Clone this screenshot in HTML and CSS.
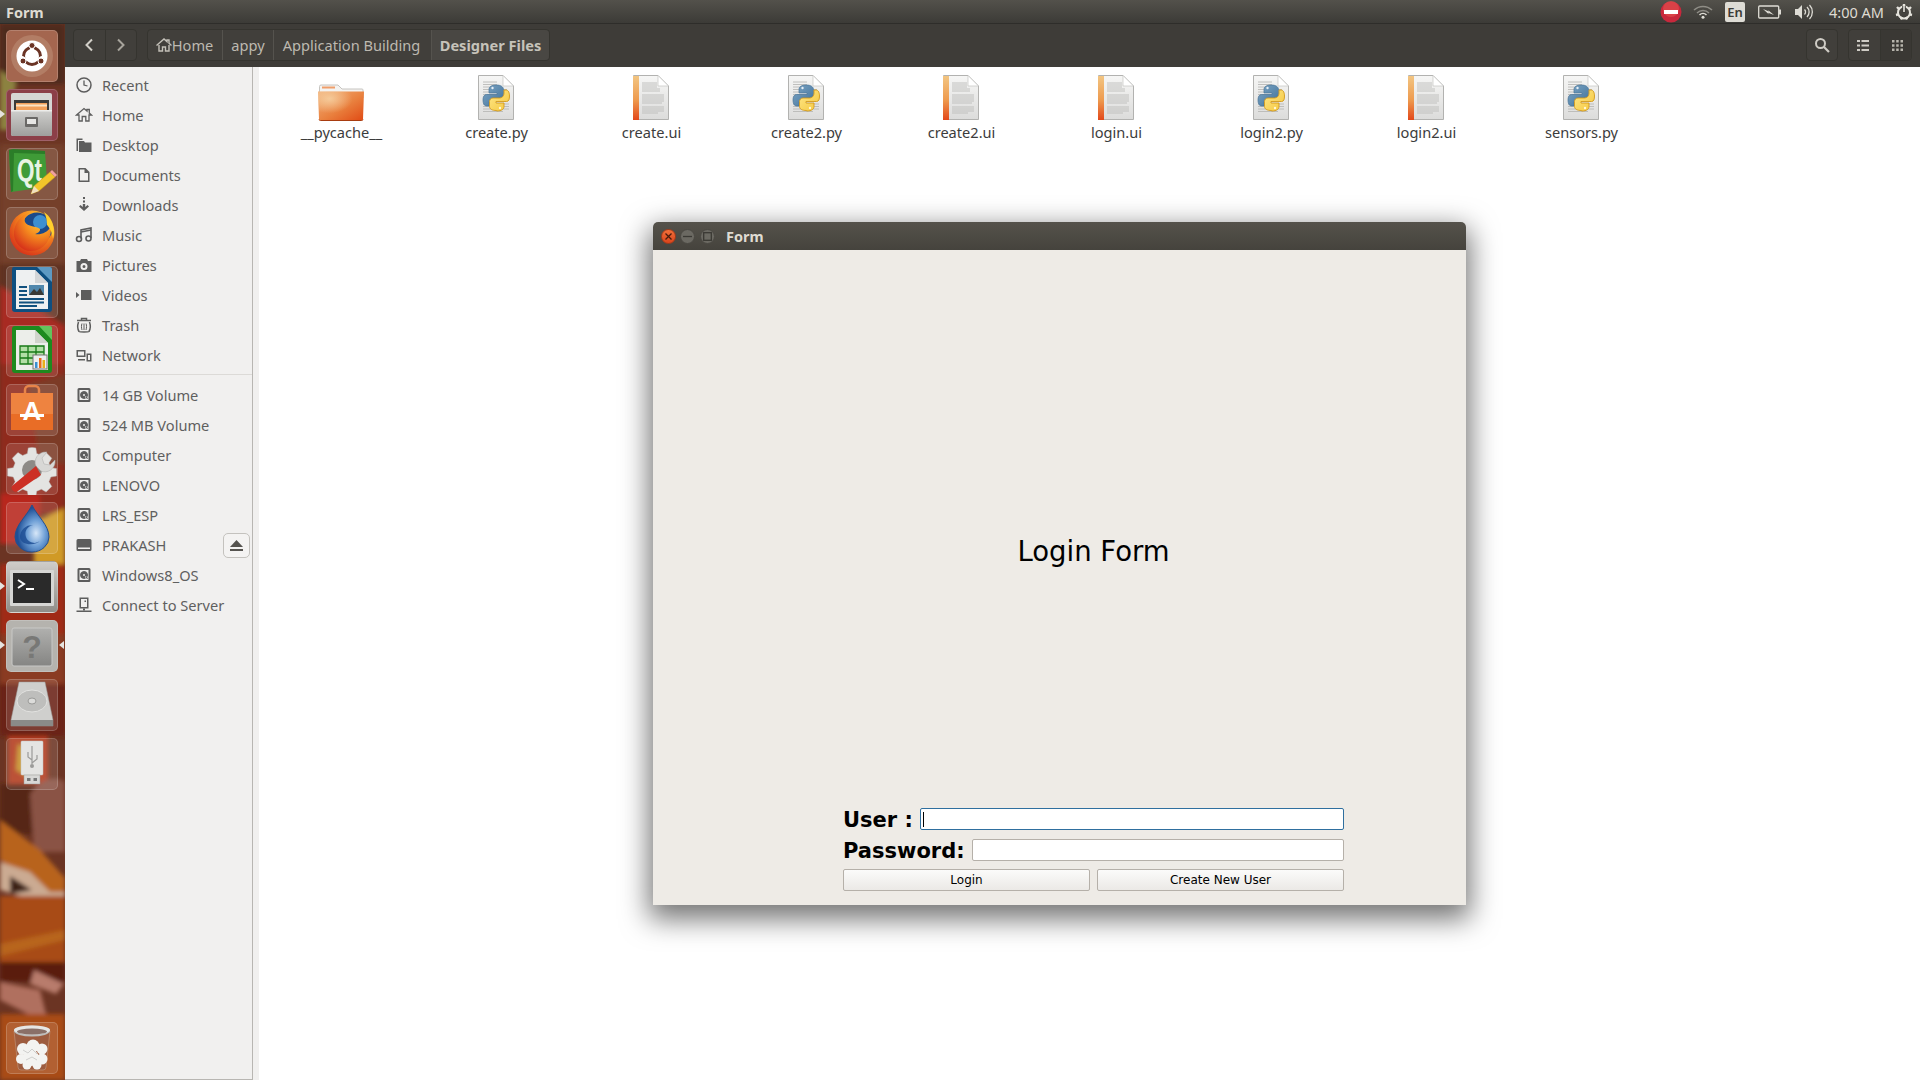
FILE: index.html
```html
<!DOCTYPE html>
<html lang="en">
<head>
<meta charset="utf-8">
<title>Form</title>
<link rel="stylesheet" href="styles.css">
</head>
<body>
<svg class="defs" width="0" height="0" aria-hidden="true">
  <defs>
    <linearGradient id="paper" x1="0" y1="0" x2="0" y2="1"><stop offset="0" stop-color="#f6f6f5"/><stop offset="1" stop-color="#dcdcdb"/></linearGradient>
    <linearGradient id="spine" x1="0" y1="0" x2="0" y2="1"><stop offset="0" stop-color="#f2c582"/><stop offset=".55" stop-color="#ee9a4e"/><stop offset="1" stop-color="#e2481a"/></linearGradient>
    <linearGradient id="fold" x1="0" y1="0" x2="1" y2="1"><stop offset="0" stop-color="#f2b27c"/><stop offset=".55" stop-color="#e9803e"/><stop offset="1" stop-color="#e04a14"/></linearGradient>
    <radialGradient id="foldglow" cx=".25" cy=".25" r=".5"><stop offset="0" stop-color="#f6cf9f" stop-opacity=".9"/><stop offset="1" stop-color="#f6cf9f" stop-opacity="0"/></radialGradient>
    <linearGradient id="pyb" x1="0" y1="0" x2="1" y2="1"><stop offset="0" stop-color="#7ea7c6"/><stop offset="1" stop-color="#3f7099"/></linearGradient>
    <linearGradient id="pyy" x1="0" y1="0" x2="1" y2="1"><stop offset="0" stop-color="#ffe88a"/><stop offset="1" stop-color="#f4c63c"/></linearGradient>
    <linearGradient id="cab" x1="0" y1="0" x2="0" y2="1"><stop offset="0" stop-color="#cfcfcd"/><stop offset="1" stop-color="#9f9f9d"/></linearGradient>
    <linearGradient id="helpg" x1="0" y1="0" x2="0" y2="1"><stop offset="0" stop-color="#b0b0ae"/><stop offset="1" stop-color="#858583"/></linearGradient>
    <symbol id="lines" viewBox="0 0 36 46">
      <path d="M5 7h14M5 9.500h14M5 12h15M5 14.500h24M5 17h26M5 19.500h26M5 22h26M5 24.500h24M5 29h26M5 31.500h26M5 34h26M5 36.500h20" stroke="#b9b9b7" stroke-width=".9" fill="none"/>
    </symbol>
    <symbol id="file-py" viewBox="0 0 36 46">
      <path d="M.5.500H25L35.500 11V44.500H.5z" fill="url(#paper)" stroke="#b2b2b0"/>
      <path d="M25 .5V11H35.500z" fill="#fff" stroke="#c4c4c2" stroke-width=".7"/>
      <use href="#lines" width="36" height="46"/>
      <path d="M18.500 10c-5.500 0-7.500 2-7.500 4.500V18h8v1.500H8.500C6 19.500 5 22 5 25s1 6 3.500 6H11v-3.500c0-2.500 2-4.500 4.500-4.500H22c2 0 3.500-1.500 3.500-3.500v-5c0-2.500-2.500-4.500-7-4.500z" fill="url(#pyb)" stroke="#4c7698" stroke-width=".7"/>
      <path d="M18.500 36c5.500 0 7.500-2 7.500-4.500V28h-8v-1.500h10.500C31 26.500 31.500 24 31.500 21s-1-6-3.500-6H26v3.500c0 2.500-2 4.500-4.500 4.500H15c-2 0-3.500 1.500-3.500 3.500v5c0 2.500 2.500 4 7 4z" fill="url(#pyy)" stroke="#d39a1c" stroke-width=".9"/>
      <circle cx="14.500" cy="13" r="1.200" fill="#e6eff6"/><circle cx="22" cy="33" r="1.200" fill="#fff8d8"/>
    </symbol>
    <symbol id="file-ui" viewBox="0 0 36 46">
      <path d="M.5.500H25L35.500 11V44.500H.5z" fill="url(#paper)" stroke="#b2b2b0"/>
      <path d="M25 .5V11H35.500z" fill="#fff" stroke="#c4c4c2" stroke-width=".7"/>
      <rect x="0" y="1" width="6" height="44" fill="url(#spine)"/>
      <path d="M9 8h15M9 10h15M9 12h15M9 14h18M9 16h18M9 20h22M9 22h22M9 24h22M9 26h22M9 28h20M9 32h22M9 34h22M9 36h22M9 38h16" stroke="#bcbcba" stroke-width=".9" fill="none"/>
    </symbol>
    <symbol id="folder" viewBox="0 0 46 38">
      <path d="M1.500 3.500A1.500 1.500 0 0 1 3 2h17l4 4h20a1 1 0 0 1 1 1v8H1.500z" fill="#f4f3f1" stroke="#c6c4c0"/>
      <rect x="4" y="3.500" width="13" height="2" fill="#ef9e6a"/>
      <path d="M0 8.500h46l-1 27.500a1.500 1.500 0 0 1-1.500 1.500h-41A1.500 1.500 0 0 1 1 36z" fill="url(#fold)"/>
      <path d="M0 8.500h46l-1 27.500a1.500 1.500 0 0 1-1.500 1.500h-41A1.500 1.500 0 0 1 1 36z" fill="url(#foldglow)"/>
      <path d="M1 36.500a1.500 1.500 0 0 0 1.500 1h41a1.500 1.500 0 0 0 1.500-1" fill="none" stroke="#a83c10"/>
    </symbol>
    <symbol id="i-drive" viewBox="0 0 18 18">
      <path d="M4 2h10a1.500 1.500 0 0 1 1.500 1.500v11A1.500 1.500 0 0 1 14 16H4a1.500 1.500 0 0 1-1.500-1.500v-11A1.500 1.500 0 0 1 4 2zm.5 2v10h9V4z" fill="#5d5d5d" fill-rule="evenodd"/>
      <path d="M9 5a4 4 0 1 0 1.800 7.600L9.800 10.200 12.500 11A4 4 0 0 0 9 5zm0 3a1 1 0 1 1 0 2 1 1 0 0 1 0-2z" fill="#5d5d5d" fill-rule="evenodd"/>
      <path d="M11 11l1.600 1.600" stroke="#5d5d5d" stroke-width="1.200"/>
    </symbol>
  </defs>
</svg>

<header class="topbar">
  <span class="topbar-title">Form</span>
  <div class="indicators">
    <svg class="ind-dnd" width="22" height="22" viewBox="0 0 22 22"><circle cx="11" cy="11" r="10.500" fill="#c8283c"/><circle cx="11" cy="8" r="8" fill="#e4524f" opacity=".6"/><rect x="4" y="9" width="14" height="4" fill="#fff"/></svg>
    <svg class="ind-wifi" width="20" height="14" viewBox="0 0 20 14"><path d="M1 5a13 13 0 0 1 18 0M4 8a8.500 8.500 0 0 1 12 0" fill="none" stroke="#8f8d86" stroke-width="1.500"/><path d="M6.500 10a5 5 0 0 1 7 0" fill="none" stroke="#dedcd5" stroke-width="1.500"/><circle cx="10" cy="12.300" r="1.500" fill="#dedcd5"/></svg>
    <span class="ind-lang">En</span>
    <svg class="ind-batt" width="24" height="14" viewBox="0 0 24 14"><rect x=".7" y="1" width="20" height="12" rx="1" fill="none" stroke="#dedcd5" stroke-width="1.300"/><rect x="21" y="4.500" width="2" height="5" fill="#dedcd5"/><path d="M5 4l6 2.500L10 5l6 5-6-2.200L11 9.500z" fill="#dedcd5"/></svg>
    <svg class="ind-vol" width="20" height="18" viewBox="0 0 20 18"><path d="M1 6h3l4-4v14l-4-4H1z" fill="#dedcd5"/><path d="M10.500 6.500a3.500 3.500 0 0 1 0 5M13 4a7 7 0 0 1 0 10M15.500 2a10 10 0 0 1 0 14" fill="none" stroke="#dedcd5" stroke-width="1.300"/></svg>
    <span class="ind-clock">4:00 AM</span>
    <svg class="ind-gear" width="18" height="18" viewBox="0 0 18 18"><circle cx="9" cy="9.500" r="6" fill="none" stroke="#e6e4dd" stroke-width="2"/><path d="M9 1v3M2 4l2 2M16 4l-2 2M1 12l3-.8M17 12l-3-.8M6 16.500l1-2.500M12 16.500l-1-2.500" stroke="#e6e4dd" stroke-width="2.400"/><path d="M9 3v7" stroke="#3e3d38" stroke-width="3.500"/><path d="M9 2.500V9" stroke="#e6e4dd" stroke-width="1.600"/></svg>
  </div>
</header>

<div class="main">
  <nav class="launcher">
    <svg class="wallpaper" viewBox="0 0 65 1056" preserveAspectRatio="none" aria-hidden="true">
      <defs><filter id="soft"><feGaussianBlur stdDeviation="2"/></filter></defs>
      <rect width="65" height="1056" fill="#6b3423"/>
      <g filter="url(#soft)">
        <path d="M0 0h65v60H0z" fill="#4e2b1a"/>
        <path d="M0 46l16 12-6 48H0z" fill="#8c8240"/>
        <path d="M0 120h65v120H0z" fill="#74402c"/>
        <path d="M0 240h65v60l-65-40z" fill="#5e3020"/>
        <path d="M0 262l65 40v40H0z" fill="#a82a20"/>
        <path d="M0 340h65v150H0z" fill="#8f2a1c"/>
        <path d="M28 360l37-10v90H40z" fill="#7c3a26"/>
        <path d="M0 470h40v50H0z" fill="#b8251c"/>
        <path d="M34 498l31-14v56H34z" fill="#d09a26"/>
        <path d="M0 540h65v120H0z" fill="#a02a18"/>
        <path d="M0 610h65v50H0z" fill="#8a3a22"/>
        <path d="M0 660h65v52H0z" fill="#6a2414"/>
        <path d="M8 712h40v48H8z" fill="#b23a1e"/>
        <path d="M18 720l18 8-6 26-14-8z" fill="#c8942a"/>
        <path d="M0 760h65v50H0z" fill="#562616"/>
        <path d="M30 770c12-18 28-18 35-12v70H34z" fill="#8a5244"/>
        <path d="M0 796l40 30 25 28v34L40 866 0 836z" fill="#b8641e"/>
        <path d="M0 838l30 10 20 20h15v8H34L0 866z" fill="#cbaa92"/>
        <path d="M10 852l22 14-22 4z" fill="#3e2018"/>
        <path d="M0 872h65v66H0z" fill="#a84c18"/>
        <path d="M0 920l65-14v10L0 932z" fill="#b8651c"/>
        <path d="M0 938h65v20H0z" fill="#5a1f10"/>
        <path d="M0 958l40 8 6 24-18 0L0 976z" fill="#b0705f"/>
        <path d="M34 946l30 14-8 10-26-10z" fill="#b87c6c"/>
        <path d="M0 990h65v66H0z" fill="#a84c18"/>
      </g>
    </svg>

    <div class="tile tile-dash">
      <svg viewBox="0 0 52 52"><circle cx="26" cy="26" r="21" fill="#c99f88" opacity=".4"/><circle cx="26" cy="26" r="15.500" fill="#fff"/><circle cx="26" cy="26" r="8.500" fill="none" stroke="#6a3324" stroke-width="3"/><g fill="#fff"><rect x="24" y="14" width="4" height="6"/><rect x="15" y="27" width="6" height="5" transform="rotate(30 18 29)"/><rect x="31" y="27" width="6" height="5" transform="rotate(-30 34 29)"/></g><g fill="#6a3324" stroke="#fff" stroke-width="1"><circle cx="26" cy="15.500" r="3"/><circle cx="17" cy="31" r="3"/><circle cx="35" cy="31" r="3"/></g></svg>
    </div>
    <div class="tile tile-files has-pip">
      <svg viewBox="0 0 52 52"><rect x="5" y="4" width="41" height="43" rx="2" fill="#d6d6d4"/><rect x="8" y="11" width="35" height="12" fill="#3c3b39"/><rect x="10" y="14" width="31" height="9" fill="#f2a05a"/><rect x="10" y="15.500" width="31" height="2" fill="#fbe3c4"/><path d="M5 21h41v24a2 2 0 0 1-2 2H7a2 2 0 0 1-2-2z" fill="url(#cab)"/><path d="M5 21h41v1.500H5z" fill="#ececea"/><rect x="19" y="28" width="13" height="10" rx="1" fill="#6a6967"/><rect x="21" y="30" width="9" height="5" fill="#e6e6e4"/></svg>
    </div>
    <div class="tile tile-plain">
      <svg viewBox="0 0 52 52"><path d="M3 2l36 1 2 30-8 7L5 44z" fill="#3f9b37"/><path d="M3 2l4-1 32 2v3L8 5 7 43l-2 1z" fill="#2b7d28"/><text class="qt" x="11" y="33" textLength="25" lengthAdjust="spacingAndGlyphs">Qt</text><path d="M25 46l3-8 16-14 5 5-16 14z" fill="#f2c52a" stroke="#c99a1a" stroke-width=".5"/><path d="M44 24l2-2 5 5-2 2z" fill="#f0a0a0"/><path d="M25 46l3-8 5 5z" fill="#f0e0c0"/></svg>
    </div>
    <div class="tile tile-plain">
      <svg viewBox="0 0 52 52"><defs><radialGradient id="fx" cx=".7" cy=".2" r=".85"><stop offset="0" stop-color="#ffd13a"/><stop offset=".5" stop-color="#f58a1f"/><stop offset="1" stop-color="#d8361a"/></radialGradient></defs><circle cx="26" cy="26" r="22.500" fill="url(#fx)"/><circle cx="31" cy="21" r="15.500" fill="#1c4a8a"/><circle cx="34" cy="15" r="7" fill="#3d8fd0"/><path d="M8 28C7 17 15 8 24 5c-4 3-6 7-5 10 2 5 12 4 15 7 1 3-5 5-5 5 5 1 13-1 16-8 1 13-7 25-20 25C15 44 9 36 8 28z" fill="url(#fx)"/><path d="M38 5c6 4 10 11 10 20 0 2-.500 5-1 7-1-8-4-12-6-14 0-5-1-9-3-13z" fill="#ffcf2d"/></svg>
    </div>
    <div class="tile tile-plain">
      <svg viewBox="0 0 52 52"><path d="M8 1h36a2 2 0 0 1 2 2v40a3 3 0 0 1-3 3H9a3 3 0 0 1-3-3V3a2 2 0 0 1 2-2z" fill="#0e4f80"/><path d="M31 1h13a2 2 0 0 1 2 2v13z" fill="#5d9ac3"/><path d="M10 4h19l13 13v26H10z" fill="#eef0f1"/><path d="M29 4v13h13z" fill="#d2d5d7"/><g fill="#11517f"><rect x="13" y="20" width="8" height="2"/><rect x="13" y="24" width="8" height="2"/><rect x="13" y="28" width="8" height="2"/><rect x="13" y="32" width="25" height="2"/><rect x="13" y="35.500" width="25" height="2"/><rect x="13" y="39" width="18" height="2"/></g><rect x="23" y="19" width="15" height="10" fill="#4f87ad"/><path d="M23 29l5-6 3 3 3-4 4 7z" fill="#3a3a36"/></svg>
    </div>
    <div class="tile tile-plain">
      <svg viewBox="0 0 52 52"><rect x="6" y="1" width="40" height="47" rx="3" fill="#1e8a1e"/><path d="M33 1h11a2 2 0 0 1 2 2v12z" fill="#63c35c"/><path d="M10 5h19l13 13v27H10z" fill="#eceeea"/><path d="M29 5v13h13z" fill="#d0d4cc"/><rect x="14" y="21" width="24" height="18" fill="#b2dfa6"/><path d="M14 21h24v18H14zM14 27h24M14 33h24M22 21v18M30 21v18" fill="none" stroke="#177a17" stroke-width="1.300"/><rect x="27" y="30" width="14" height="14" fill="#eee" stroke="#777"/><rect x="29" y="37" width="2.500" height="6" fill="#3b8fd0"/><rect x="33" y="33" width="2.500" height="10" fill="#e86a1a"/><rect x="36.500" y="35" width="2.500" height="8" fill="#e8b01a"/></svg>
    </div>
    <div class="tile tile-plain">
      <svg viewBox="0 0 52 52"><path d="M19 9V6a4 4 0 0 1 4-4h6a4 4 0 0 1 4 4v3" fill="none" stroke="#e78449" stroke-width="2.500"/><path d="M5 9h42v37H5z" fill="#ee8340"/><path d="M5 30h42v16H5z" fill="#e96d26"/><text class="appstore" x="26" y="36">A</text><rect x="14" y="30" width="24" height="3" fill="#fff"/></svg>
    </div>
    <div class="tile tile-plain">
      <svg viewBox="0 0 52 52"><path d="M26 3l4 .500 1 6 5 2 5-3 6 6-3 5 2 5 6 1v8l-6 1-2 5 3 5-6 6-5-3-5 2-1 6h-8l-1-6-5-2-5 3-6-6 3-5-2-5-6-1v-8l6-1 2-5-3-5 6-6 5 3 5-2 1-6z" fill="#e4e4e2" stroke="#b8b8b6" stroke-width=".5" transform="translate(1.600 1.600) scale(.94)"/><circle cx="26" cy="27" r="10" fill="#8d8a86"/><path d="M30 23c-3-6 2-15 11-14l-5 6 2 6 6 1 5-5c1 9-8 14-14 11z" fill="#d8d8d6" stroke="#aaa" stroke-width=".5"/><path d="M6 43l24-20 5 9L12 48c-3 3-8-2-6-5z" fill="#cc3025"/></svg>
    </div>
    <div class="tile tile-plain">
      <svg viewBox="0 0 52 52"><defs><radialGradient id="dl" cx=".62" cy=".6" r=".55"><stop offset="0" stop-color="#d7e7f8"/><stop offset=".5" stop-color="#6e9fd6"/><stop offset="1" stop-color="#1f4f95"/></radialGradient></defs><path d="M26 3c5 11 17 20 17 32a17 15 0 0 1-34 0C9 23 21 14 26 3z" fill="url(#dl)" stroke="#24508f" stroke-width="1"/><path d="M14 35a12 12 0 0 1 13-12 9 9 0 1 0 8 15c-6 7-21 5-21-3z" fill="#1f4f95" opacity=".85"/></svg>
    </div>
    <div class="tile tile-term has-pip">
      <svg viewBox="0 0 52 52"><rect x="4" y="9" width="44" height="36" rx="1" fill="#d6d6d4"/><rect x="7" y="12" width="38" height="30" fill="#2a2a2a"/><path d="M12 19l6 4-6 4" fill="none" stroke="#fff" stroke-width="2"/><rect x="20" y="27" width="8" height="2" fill="#fff"/></svg>
    </div>
    <div class="tile tile-help has-pip has-pip-right">
      <svg viewBox="0 0 52 52"><rect x="6" y="8" width="40" height="38" rx="2" fill="url(#helpg)" stroke="#c8c8c6"/><text class="helpq" x="26" y="38">?</text></svg>
    </div>
    <div class="tile tile-plain">
      <svg viewBox="0 0 52 52"><path d="M13 3h26l8 38v6H5v-6z" fill="#cfcfcd" stroke="#9a9a98" stroke-width=".5"/><ellipse cx="26" cy="22" rx="15" ry="11" fill="#bebebc" stroke="#e2e2e0"/><ellipse cx="26" cy="22" rx="4" ry="3" fill="#dcdcda" stroke="#9a9a98"/><rect x="5" y="41" width="42" height="6" fill="#8a8a88"/></svg>
    </div>
    <div class="tile tile-plain">
      <svg viewBox="0 0 52 52"><rect x="15" y="3" width="22" height="34" rx="1" fill="#e4e4e2" stroke="#c4c4c2" stroke-width=".5"/><path d="M26 8v18M26 22l-4-3v-5M26 25l5-4v-4" fill="none" stroke="#9b9b99" stroke-width="1.200"/><circle cx="26" cy="28" r="2" fill="#9b9b99"/><rect x="18" y="37" width="16" height="9" fill="#d8d8d6" stroke="#9b9b99" stroke-width=".5"/><rect x="21" y="40" width="3.500" height="3" fill="#777"/><rect x="27.500" y="40" width="3.500" height="3" fill="#777"/></svg>
    </div>
    <div class="tile tile-plain tile-last">
      <svg viewBox="0 0 52 52"><path d="M8 9l4 36a3 3 0 0 0 3 3h22a3 3 0 0 0 3-3l4-36z" fill="#8d5a4a" opacity=".55" stroke="#cfc8c0" stroke-width=".6"/><g fill="#f3f3f1"><circle cx="17" cy="27" r="6"/><circle cx="27" cy="24" r="6.500"/><circle cx="36" cy="27" r="5.500"/><circle cx="15" cy="37" r="5"/><circle cx="25" cy="36" r="8"/><circle cx="36" cy="37" r="5.500"/><circle cx="21" cy="43" r="4.500"/><circle cx="31" cy="43" r="4.500"/></g><path d="M17 28l5 3 4-4 5 5M20 38l6-3 5 3" fill="none" stroke="#cfcfcd"/><ellipse cx="26" cy="9" rx="18" ry="5.500" fill="#bdbdbb"/><ellipse cx="26" cy="8" rx="18" ry="4.500" fill="#e6e6e4"/><ellipse cx="26" cy="9.500" rx="15" ry="3" fill="#8a7068"/></svg>
    </div>
  </nav>

  <div class="nautilus">
    <div class="toolbar">
      <div class="btn-group nav-group">
        <button class="tb-btn" type="button"><svg width="10" height="14" viewBox="0 0 10 14"><path d="M8 1.500L2.500 7 8 12.500" fill="none" stroke="#d2cfc8" stroke-width="2"/></svg></button>
        <button class="tb-btn" type="button"><svg width="10" height="14" viewBox="0 0 10 14"><path d="M2 1.500L7.500 7 2 12.500" fill="none" stroke="#a7a49c" stroke-width="2"/></svg></button>
      </div>
      <div class="btn-group path-group">
        <span class="crumb crumb-home"><svg width="16" height="14" viewBox="0 0 16 14"><path d="M.5 7.500L8 1l3 2.600V2h2v3.300l2.500 2.200M3 7v6h3.500V9h3v4H13V7" fill="none" stroke="#c4c1b9" stroke-width="1.400"/></svg>Home</span>
        <span class="crumb crumb-appy">appy</span>
        <span class="crumb crumb-app">Application Building</span>
        <span class="crumb crumb-current">Designer Files</span>
      </div>
      <div class="toolbar-right">
        <button class="btn-group tb-single" type="button"><svg width="16" height="16" viewBox="0 0 16 16"><circle cx="6.500" cy="6.500" r="4.500" fill="none" stroke="#cfccc5" stroke-width="2"/><path d="M10 10l5 5" stroke="#cfccc5" stroke-width="2.200"/></svg></button>
        <div class="btn-group view-group">
          <button class="tb-btn tb-btn-list" type="button"><svg width="12" height="11" viewBox="0 0 12 11"><path d="M0 0h3v2H0zM0 4.500h3v2H0zM0 9h3v2H0zM4.500 0H12v2H4.500zM4.500 4.500H12v2H4.500zM4.500 9H12v2H4.500z" fill="#cfccc5"/></svg></button>
          <button class="tb-btn tb-btn-on" type="button"><svg width="11" height="11" viewBox="0 0 11 11"><path d="M0 0h2.500v2.500H0zM4.200 0h2.500v2.500H4.200zM8.500 0H11v2.500H8.500zM0 4.200h2.500v2.500H0zM4.200 4.200h2.500v2.500H4.200zM8.500 4.200H11v2.500H8.500zM0 8.500h2.500V11H0zM4.200 8.500h2.500V11H4.200zM8.500 8.500H11V11H8.500z" fill="#b8b5ad"/></svg></button>
        </div>
      </div>
    </div>

    <div class="panes">
      <aside class="sidebar">
        <ul class="side-list">
          <li class="side-row"><svg class="side-ic" viewBox="0 0 18 18"><circle cx="9" cy="9" r="7" fill="none" stroke="#5d5d5d" stroke-width="1.500"/><path d="M9 4.500V9l3.500 1" fill="none" stroke="#5d5d5d" stroke-width="1.300"/></svg>Recent</li>
          <li class="side-row"><svg class="side-ic" viewBox="0 0 18 18"><path d="M1.500 9L9 2.500 12 5V3.500h2.300v3.600L16.500 9H14v6h-3.200v-4.500H7.200V15H4V9z" fill="none" stroke="#5d5d5d" stroke-width="1.300"/></svg>Home</li>
          <li class="side-row"><svg class="side-ic" viewBox="0 0 18 18"><path d="M1.500 2.500h6v1.500H3v11H1.500z" fill="#5d5d5d"/><path d="M4 5h5l1 1.500h6.500V16H4z" fill="#5d5d5d"/></svg>Desktop</li>
          <li class="side-row"><svg class="side-ic" viewBox="0 0 18 18"><path d="M3.500 2h7l4 4v10h-11zM5 3.500v11h8V7H9.500V3.500z" fill="#5d5d5d" fill-rule="evenodd"/></svg>Documents</li>
          <li class="side-row"><svg class="side-ic" viewBox="0 0 18 18"><path d="M8 1h2v2H8zM8 4.500h2v2H8zM7.800 8h2.400v3l2.300-2 1.500 1.500L9 15 4 10.500 5.500 9l2.300 2z" fill="#5d5d5d"/></svg>Downloads</li>
          <li class="side-row"><svg class="side-ic" viewBox="0 0 18 18"><path d="M6 12.500V4l10-2v10" fill="none" stroke="#5d5d5d" stroke-width="1.600"/><circle cx="4" cy="13" r="2.500" fill="none" stroke="#5d5d5d" stroke-width="1.600"/><circle cx="13.500" cy="12.500" r="2.500" fill="none" stroke="#5d5d5d" stroke-width="1.600"/><path d="M6 6l10-2" stroke="#5d5d5d" stroke-width="1.600"/></svg>Music</li>
          <li class="side-row"><svg class="side-ic" viewBox="0 0 18 18"><path d="M1.500 5H5l1-2h6l1 2h3.500v11h-15zM9 7a3.500 3.500 0 1 0 0 7 3.500 3.500 0 0 0 0-7zm0 2a1.500 1.500 0 1 1 0 3 1.500 1.500 0 0 1 0-3z" fill="#5d5d5d" fill-rule="evenodd"/></svg>Pictures</li>
          <li class="side-row"><svg class="side-ic" viewBox="0 0 18 18"><path d="M6 4h10.500v10H6zM1 6l3.500 3L1 12z" fill="#5d5d5d"/></svg>Videos</li>
          <li class="side-row"><svg class="side-ic" viewBox="0 0 18 18"><path d="M2 4.500h14M6.500 4V2.500h5V4" fill="none" stroke="#5d5d5d" stroke-width="1.500"/><path d="M3.500 6c-1 3-1 7 .5 9.500 1 .7 9 .7 10 0 1.500-2.500 1.500-6.500.5-9.500" fill="none" stroke="#5d5d5d" stroke-width="1.500"/><path d="M7 7.500c-.7 2-.7 4 0 6.500M9 7.500v6.500M11 7.500c.7 2 .7 4 0 6.500" fill="none" stroke="#5d5d5d"/></svg>Trash</li>
          <li class="side-row"><svg class="side-ic" viewBox="0 0 18 18"><path d="M1.500 4h9v7h-9zM3 5.500v4h6v-4zM3 13h7v1.500H3zM11.500 7.500h5v8h-5zM13 9v5h2V9z" fill="#5d5d5d" fill-rule="evenodd"/></svg>Network</li>
        </ul>
        <hr class="side-sep">
        <ul class="side-list">
          <li class="side-row"><svg class="side-ic"><use href="#i-drive"/></svg>14 GB Volume</li>
          <li class="side-row"><svg class="side-ic"><use href="#i-drive"/></svg>524 MB Volume</li>
          <li class="side-row"><svg class="side-ic"><use href="#i-drive"/></svg>Computer</li>
          <li class="side-row"><svg class="side-ic"><use href="#i-drive"/></svg>LENOVO</li>
          <li class="side-row"><svg class="side-ic"><use href="#i-drive"/></svg>LRS_ESP</li>
          <li class="side-row side-row-eject"><svg class="side-ic" viewBox="0 0 18 18"><path d="M3 3h12a1.500 1.500 0 0 1 1.500 1.500v9A1.500 1.500 0 0 1 15 15H3a1.500 1.500 0 0 1-1.500-1.500v-9A1.500 1.500 0 0 1 3 3z" fill="#5d5d5d"/><rect x="3" y="11.500" width="12" height="1.500" fill="#f1f0ef"/></svg>PRAKASH<button class="eject" type="button"><svg width="13" height="11" viewBox="0 0 13 11"><path d="M6.500 0L13 7H0zM0 9h13v2H0z" fill="#55534f"/></svg></button></li>
          <li class="side-row"><svg class="side-ic"><use href="#i-drive"/></svg>Windows8_OS</li>
          <li class="side-row"><svg class="side-ic" viewBox="0 0 18 18"><path d="M4.500 1.500h9v11h-9zM6 3v8h6V3z" fill="#5d5d5d" fill-rule="evenodd"/><rect x="9.500" y="4.500" width="1.500" height="1.500" fill="#5d5d5d"/><rect x="8" y="12.500" width="2" height="2" fill="#5d5d5d"/><rect x="1.500" y="14.500" width="15" height="1.500" fill="#5d5d5d"/></svg>Connect to Server</li>
        </ul>
      </aside>

      <main class="files">
        <div class="file"><svg class="ic-folder"><use href="#folder"/></svg><span class="file-name">__pycache__</span></div>
        <div class="file"><svg class="ic-file"><use href="#file-py"/></svg><span class="file-name">create.py</span></div>
        <div class="file"><svg class="ic-file"><use href="#file-ui"/></svg><span class="file-name">create.ui</span></div>
        <div class="file"><svg class="ic-file"><use href="#file-py"/></svg><span class="file-name">create2.py</span></div>
        <div class="file"><svg class="ic-file"><use href="#file-ui"/></svg><span class="file-name">create2.ui</span></div>
        <div class="file"><svg class="ic-file"><use href="#file-ui"/></svg><span class="file-name">login.ui</span></div>
        <div class="file"><svg class="ic-file"><use href="#file-py"/></svg><span class="file-name">login2.py</span></div>
        <div class="file"><svg class="ic-file"><use href="#file-ui"/></svg><span class="file-name">login2.ui</span></div>
        <div class="file"><svg class="ic-file"><use href="#file-py"/></svg><span class="file-name">sensors.py</span></div>
      </main>
    </div>
  </div>
</div>

<section class="window">
  <div class="win-title">
    <span class="win-btn win-close"><svg width="9" height="9" viewBox="0 0 9 9"><path d="M1.500 1.500l6 6M7.500 1.500l-6 6" stroke="#4a1c0c" stroke-width="1.300"/></svg></span>
    <span class="win-btn"><svg width="9" height="9" viewBox="0 0 9 9"><path d="M0 4.500h9" stroke="#3a3934" stroke-width="1.300"/></svg></span>
    <span class="win-btn"><svg width="9" height="9" viewBox="0 0 9 9"><rect x=".7" y=".7" width="7.600" height="7.600" fill="none" stroke="#3a3934" stroke-width="1.300"/></svg></span>
    <span class="win-name">Form</span>
  </div>
  <div class="win-body">
    <h1 class="login-title">Login Form</h1>
    <form class="login-form">
      <div class="form-row form-row-user"><label class="form-label">User :</label><div class="input input-focus"><span class="caret"></span></div></div>
      <div class="form-row"><label class="form-label">Password:</label><div class="input"></div></div>
      <div class="form-row form-row-btns"><button class="qt-btn" type="button">Login</button><button class="qt-btn" type="button">Create New User</button></div>
    </form>
  </div>
</section>
</body>
</html>
```

FILE: styles.css
```css
* { box-sizing: border-box; }
html, body { margin: 0; padding: 0; height: 100%; overflow: hidden; }
body {
  width: 1920px;
  height: 1080px;
  display: flex;
  flex-direction: column;
  font-family: "Noto Sans", "Open Sans", sans-serif;
  background: #fff;
  position: relative;
}
button { font: inherit; padding: 0; margin: 0; background: none; border: 0; }
ul { list-style: none; margin: 0; padding: 0; }
svg { display: block; flex: none; }
.defs { position: absolute; }

/* top panel */
.topbar {
  height: 24px;
  flex: none;
  display: flex;
  align-items: center;
  padding-left: 6px;
  background: linear-gradient(#53514b, #3c3b37);
  color: #dfdbd2;
  font-size: 14.5px;
  border-bottom: 1px solid #2e2d2a;
}
.topbar-title { font-weight: 700; }
.indicators { margin-left: auto; display: flex; align-items: center; height: 24px; }
.ind-dnd { margin-right: 11px; }
.ind-wifi { margin-right: 12px; }
.ind-lang {
  width: 20px; height: 20px; border-radius: 2px;
  background: #dedcd5; color: #3c3b37;
  font-size: 13px; font-weight: 600;
  display: flex; align-items: center; justify-content: center;
  margin-right: 13px;
}
.ind-batt { margin-right: 12px; }
.ind-vol { margin-right: 15px; }
.ind-clock { font-size: 14.5px; color: #dfdbd2; width: 53px; white-space: nowrap; margin-right: 13px; }
.ind-gear { margin-right: 7px; }

/* layout */
.main { flex: 1; display: flex; min-height: 0; }

/* launcher */
.launcher {
  width: 65px;
  flex: none;
  position: relative;
  overflow: hidden;
  display: flex;
  flex-direction: column;
  align-items: flex-start;
  gap: 7px;
  padding: 6px 0 6px 6px;
}
.wallpaper { position: absolute; left: 0; top: 0; width: 65px; height: 1056px; }
.tile {
  position: relative;
  width: 52px;
  height: 52px;
  flex: none;
  border-radius: 5px;
  border: 1px solid rgba(255,255,255,.18);
  background: rgba(255,255,255,.12);
}
.tile svg { position: absolute; left: -1px; top: -1px; width: 52px; height: 52px; }
.tile-dash { background: #a4664f; }
.tile-files { background: #8c3f48; }
.tile-term { background: linear-gradient(#cfcdc9, #8f8d88); }
.tile-help { background: #b5b3ae; }
.tile-last { margin-top: auto; }
.has-pip::before {
  content: ""; position: absolute; left: -7px; top: 20px;
  border-left: 5px solid #e6e4e0; border-top: 4px solid transparent; border-bottom: 4px solid transparent;
}
.has-pip-right::after {
  content: ""; position: absolute; right: -7px; top: 20px;
  border-right: 5px solid #e6e4e0; border-top: 4px solid transparent; border-bottom: 4px solid transparent;
}
.qt { font: 700 31px "Liberation Sans", sans-serif; fill: #e8f4e4; }
.appstore { font: 700 26px "Liberation Sans", sans-serif; fill: #fff; text-anchor: middle; }
.helpq { font: 700 32px "Liberation Sans", sans-serif; fill: #787876; text-anchor: middle; }

/* nautilus */
.nautilus { flex: 1; display: flex; flex-direction: column; min-width: 0; }
.toolbar {
  height: 43px;
  flex: none;
  display: flex;
  align-items: center;
  background: #3e3c38;
  padding: 0 8px 1px 8px;
  color: #bdb9b0;
  font-size: 14.6px;
}
.btn-group {
  display: flex;
  height: 32px;
  border: 1px solid #35342f;
  border-radius: 4px;
  background: #413f3b;
}
.nav-group { width: 64px; margin-right: 10px; }
.tb-btn { flex: 1; display: flex; align-items: center; justify-content: center; }
.nav-group .tb-btn + .tb-btn, .view-group .tb-btn + .tb-btn { border-left: 1px solid #35342f; }
.path-group { align-items: stretch; width: 403px; }
.crumb { display: flex; align-items: center; justify-content: center; white-space: nowrap; border-right: 1px solid #55534e; }
.crumb-home { width: 75px; padding-right: 1px; }
.crumb-appy { width: 51px; }
.crumb-app { width: 158px; padding-right: 2px; }
.crumb-current { flex: 1; border-right: 0; font-weight: 700; background: #494743; border-radius: 0 4px 4px 0; color: #c6c3ba; }
.toolbar-right { margin-left: auto; display: flex; align-items: center; gap: 10px; }
.tb-single { width: 32px; align-items: center; justify-content: center; }
.view-group { width: 64px; }
.tb-btn-list { padding-right: 3px; }
.tb-btn-on { background: #3a3834; border-radius: 0 4px 4px 0; padding-left: 2px; }

/* panes */
.panes { flex: 1; display: flex; min-height: 0; }
.sidebar {
  width: 188px;
  flex: none;
  background: #f1f0ef;
  border-right: 1px solid #b8b6b2;
  border-bottom: 1px solid #b8b6b2;
  padding-top: 3px;
  color: #5f5f5f;
  font-size: 14.6px;
}
.side-row { height: 30px; display: flex; align-items: center; padding-left: 10px; gap: 9px; white-space: nowrap; }
.side-ic { width: 18px; height: 18px; }
.side-sep { border: 0; height: 1px; background: #dcdad7; margin: 4px 0 5px; }
.side-row-eject { position: relative; }
.eject {
  position: absolute; right: 2px; top: 3px;
  width: 27px; height: 25px;
  border: 1px solid #c4c2be; border-radius: 5px; background: #f4f3f2;
  display: flex; align-items: center; justify-content: center;
}
.files {
  flex: 1;
  min-width: 0;
  border-left: 6px solid #f1f0ef;
  background: #fff;
  padding: 7px 0 0 5px;
  display: flex;
  align-items: flex-start;
}
.file { width: 155px; flex: none; display: flex; flex-direction: column; align-items: center; height: 70px; color: #3c3c3c; font-size: 14.6px; }
.ic-file { width: 36px; height: 46px; margin-top: 1px; margin-left: -1px; }
.ic-folder { width: 46px; height: 38px; margin-top: 9px; margin-left: -1px; }
.file-name { margin-top: 1px; line-height: 20px; white-space: nowrap; }

/* Qt window */
.window {
  position: absolute;
  left: 653px;
  top: 222px;
  width: 813px;
  height: 683px;
  display: flex;
  flex-direction: column;
  border-radius: 5px 5px 0 0;
  box-shadow: 0 10px 28px 4px rgba(0,0,0,.55);
}
.win-title {
  height: 28px; flex: none;
  display: flex; align-items: center;
  padding-left: 7.5px; gap: 4.5px;
  background: linear-gradient(#55524b, #45433d);
  border-radius: 5px 5px 0 0;
}
.win-btn {
  width: 15px; height: 15px; border-radius: 50%;
  background: #6b6962; border: 1px solid #4a4842;
  display: flex; align-items: center; justify-content: center;
}
.win-close { background: linear-gradient(#f2703a, #d9441c); border-color: #a83a18; }
.win-name { color: #dfdbd2; font-size: 14.5px; font-weight: 700; margin-left: 7px; }
.win-body {
  flex: 1;
  background: #eeebe6;
  display: flex;
  flex-direction: column;
  padding: 0 122px 14px 190px;
  font-family: "DejaVu Sans", sans-serif;
  color: #000;
}
.login-title { font-size: 27.5px; font-weight: 400; text-align: center; margin: 283px 0 0; line-height: 36px; }
.login-form { margin-top: auto; display: flex; flex-direction: column; gap: 8px; }
.form-row { display: flex; align-items: center; height: 22px; gap: 7px; }
.form-row-user { margin-bottom: 1px; }
.form-label { font-size: 21px; font-weight: 700; line-height: 22px; white-space: nowrap; padding-top: 1px; }
.input { flex: 1; height: 22px; background: #fff; border: 1px solid #b5b0a9; border-radius: 2px; display: flex; align-items: center; padding-left: 2px; }
.input-focus { border-color: #2f6f9f; }
.caret { width: 1px; height: 15px; background: #000; }
.form-row-btns { gap: 7px; }
.qt-btn {
  flex: 1; height: 22px;
  font-family: "DejaVu Sans", sans-serif;
  font-size: 12px;
  color: #000;
  border: 1px solid #b5b0a9; border-radius: 2px;
  background: linear-gradient(#fbfbfa, #ebe9e6);
}
```
